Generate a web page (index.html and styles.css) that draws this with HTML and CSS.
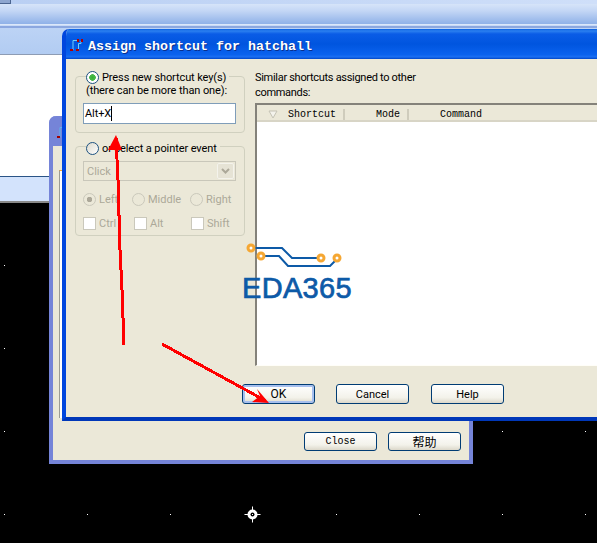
FILE: index.html
```html
<!DOCTYPE html>
<html lang="en">
<head>
  <meta charset="UTF-8">
  <meta name="viewport" content="width=device-width, initial-scale=1.0">
  <title>Assign shortcut for hatchall</title>
  <link rel="stylesheet" href="styles.css">
</head>
<body>

  <div class="desktop">
    <div class="menu-strip"><span class="menu-tab"></span></div>
    <div class="toolbar"></div>
    <div class="tool-lines"></div>
    <div class="tab-strip"></div>
    <div class="sheet"></div>
    <div class="status"></div>
    <svg class="canvas" width="597" height="340">
      <defs>
        <pattern id="grid" x="4" y="62" width="83" height="83" patternUnits="userSpaceOnUse">
          <rect width="1" height="1" fill="#fff"/>
        </pattern>
      </defs>
      <rect width="597" height="340" fill="url(#grid)"/>
      <g transform="translate(252.5 311.5)" fill="#fff">
        <path d="M-.5 -8h1v16h-1zM-8 -.5h16v1h-16z"/>
        <circle r="5"/>
        <circle r="2" fill="#000"/>
        <rect x="-.5" y="-.5" width="1" height="1"/>
      </g>
    </svg>
  </div>

  <!-- window behind -->
  <div class="window back-window">
    <div class="titlebar back-title">
      <svg class="title-icon" width="14" height="16" viewBox="0 0 14 16">
        <path d="M3 11V1.5H7" fill="none" stroke="#5fb4ee"/>
        <path d="M0 10h3v2H0z" fill="#a00000"/>
      </svg>
    </div>
    <div class="back-body">
      <div class="back-list"></div>
      <div class="back-footer">
        <button class="btn btn-mono">Close</button>
        <button class="btn btn-cjk">帮助</button>
      </div>
    </div>
  </div>

  <!-- shortcut dialog -->
  <div class="window front-window">
    <div class="titlebar">
      <svg class="title-icon" width="14" height="16" viewBox="0 0 14 16">
        <path d="M3 11V1.5H7M8.5 11V4.5H11V2" fill="none" stroke="#6fd0f8"/>
        <path d="M0 10h3v2H0zM6 10h3v2H6zM7 0h2v3H7zM11 0h2v3h-2z" fill="#b00000"/>
      </svg>
      <span class="title-text">Assign shortcut for hatchall</span>
    </div>

    <div class="dialog-body">
      <div class="dialog-main">
        <div class="left-col">
          <div class="group group-keys">
            <div class="group-head">
              <span class="radio radio-on"></span>
              <span>Press new shortcut key(s)</span>
            </div>
            <p class="hint">(there can be more than one):</p>
            <div class="key-input">Alt+X<span class="caret"></span></div>
          </div>

          <div class="group group-pointer">
            <div class="group-head">
              <span class="radio"></span>
              <span>or select a pointer event</span>
            </div>
            <div class="combo">
              <span class="combo-text">Click</span>
              <span class="combo-btn">
                <svg width="9" height="6"><path d="M1 1l3.5 3.5L8 1" fill="none" stroke="#aca899" stroke-width="2"/></svg>
              </span>
            </div>
            <div class="option-row radio-row">
              <label class="option opt-a"><span class="radio radio-off radio-dot"></span>Left</label>
              <label class="option opt-b"><span class="radio radio-off"></span>Middle</label>
              <label class="option"><span class="radio radio-off"></span>Right</label>
            </div>
            <div class="option-row check-row">
              <label class="option opt-a"><span class="check"></span>Ctrl</label>
              <label class="option opt-b"><span class="check"></span>Alt</label>
              <label class="option"><span class="check"></span>Shift</label>
            </div>
          </div>
        </div>

        <div class="right-col">
          <p class="similar">Similar shortcuts assigned to other<br>commands:</p>
          <div class="list">
            <div class="list-head">
              <span class="col col-shortcut">
                <svg class="sort" width="11" height="9"><path d="M1 1h8L5 8z" fill="#f4f3ec" stroke="#c4c2b4"/></svg>
                Shortcut
              </span>
              <span class="col col-mode">Mode</span>
              <span class="col col-command">Command</span>
            </div>
          </div>
        </div>
      </div>

      <div class="dialog-footer">
        <button class="btn btn-default">OK</button>
        <button class="btn btn-small">Cancel</button>
        <button class="btn btn-small btn-help">Help</button>
      </div>
    </div>
  </div>

  <!-- watermark and hand drawn arrows on top -->
  <div class="logo">
    <svg class="logo-traces" width="112" height="34" viewBox="0 0 112 34">
      <g fill="none" stroke="#0d5aa7" stroke-width="2">
        <path d="M9 7h31l10 10h29"/>
        <path d="M19 15h18l9 10h42l7-7"/>
      </g>
      <g fill="#fff" stroke="#f5a733" stroke-width="3">
        <circle cx="9" cy="7" r="3"/>
        <circle cx="19" cy="15" r="3"/>
        <circle cx="79" cy="17" r="3"/>
        <circle cx="95" cy="17" r="3"/>
      </g>
    </svg>
    <span class="logo-text">EDA365</span>
  </div>

  <svg class="arrows" width="597" height="543">
    <g fill="none" stroke="#ff0000" stroke-width="3" shape-rendering="crispEdges">
      <path d="M124 345L122 290L120 250L118 180L116 138"/>
      <path d="M162 344L266 401"/>
    </g>
    <path d="M116 135L108 150L122 150z" fill="#ff0000"/>
    <path d="M269 403L257 389L260 396L252 402z" fill="#ff0000"/>
  </svg>

</body>
</html>
```

FILE: styles.css
```css
* {
  box-sizing: border-box;
}

html, body {
  margin: 0;
  height: 100%;
  overflow: hidden;
}

body {
  position: relative;
  width: 597px;
  height: 543px;
  background: #000;
  font-family: Roboto, "Liberation Sans", sans-serif;
  font-size: 11px;
  color: #000;
}

p {
  margin: 0;
}

/* app behind the dialogs */
.desktop {
  display: flex;
  flex-direction: column;
  height: 543px;
}

.menu-strip {
  height: 4px;
  background: linear-gradient(90deg, #b9cff3, #cfdff9);
}

.menu-tab {
  display: block;
  width: 11px;
  height: 4px;
  background: #8ea6cf;
  border-right: 1px solid #4b6590;
  border-bottom: 1px solid #4b6590;
}

.toolbar {
  height: 20px;
  background: linear-gradient(#d6e4f9, #c3d6f5 35%, #8fb1e8);
}

.tool-lines {
  height: 4px;
  background: #c8daf6;
  border-top: 1px solid #dbe7fa;
  border-bottom: 2px solid #8ba7e0;
}

.tab-strip {
  height: 27px;
  background: linear-gradient(#bcd3f5, #b2ccf2);
  border-bottom: 1px solid #8d9cb4;
}

.sheet {
  height: 121px;
  background: #fff;
}

.status {
  height: 27px;
  background: #d3e3fc;
  border-top: 1px solid #2a5486;
  border-bottom: 2px solid #8a8a8a;
}

.canvas {
  display: block;
  background: #000;
}

/* windows */
.window {
  position: absolute;
  display: flex;
  flex-direction: column;
  background: #ebe8d8;
}

.front-window {
  left: 62px;
  top: 29px;
  width: 535px;
  height: 392px;
  border-radius: 7px 0 0 0;
  overflow: hidden;
  border-left: 4px solid #0046de;
  border-bottom: 4px solid #0037b8;
}

.back-window {
  left: 49px;
  top: 116px;
  width: 424px;
  height: 348px;
  border: 4px solid #7584d8;
  border-top: 0;
  border-radius: 7px 7px 0 0;
}

.titlebar {
  display: flex;
  align-items: center;
  flex-shrink: 0;
  height: 30px;
  margin-left: -4px;
  padding: 4px 0 0 8px;
  background: linear-gradient(#0a5fe0 0, #2b80f0 2px, #0a5ce6 5px, #0055df 50%, #0a62ee 85%, #1b6ff2 93%, #0046c8 100%);
}

.back-title {
  margin-right: -4px;
  background: #7584d8;
  border-radius: 7px 7px 0 0;
}

.title-icon {
  display: block;
  flex-shrink: 0;
  margin-right: 4px;
  margin-top: 1px;
}

.title-text {
  font-family: "Liberation Mono", monospace;
  font-size: 13.33px;
  font-weight: bold;
  color: #fff;
  text-shadow: 1px 1px 0 #0a2f8c;
}

.back-body {
  flex: 1;
  display: flex;
  flex-direction: column;
  padding-top: 24px;
}

.back-list {
  flex: 1;
  margin-left: 6px;
  background: #fff;
  border-left: 1px solid #9c9c94;
  border-top: 1px solid #f5a733;
}

.back-footer {
  display: flex;
  justify-content: flex-end;
  gap: 11px;
  padding: 14px 8px 9px 0;
}

/* dialog */
.dialog-body {
  flex: 1;
  display: flex;
  flex-direction: column;
}

.dialog-main {
  display: flex;
  gap: 10px;
  padding: 11px 0 0 9px;
}

.left-col {
  flex-shrink: 0;
  width: 170px;
}

.group {
  border: 1px solid #d0d0bf;
  border-radius: 4px;
  padding: 0 8px 0 7px;
}

.group-keys {
  height: 57px;
  margin-top: 6px;
}

.group-pointer {
  height: 90px;
  margin-top: 13px;
}

.group-head {
  display: flex;
  align-items: center;
  gap: 3px;
  width: fit-content;
  height: 14px;
  margin: -7px 0 0 3px;
  padding-right: 3px;
  background: #ebe8d8;
  letter-spacing: -.1px;
  white-space: nowrap;
}

.group-pointer .group-head {
  margin-top: -6px;
}

.hint {
  height: 14px;
  margin-left: 3px;
  line-height: 14px;
  letter-spacing: -.1px;
  white-space: nowrap;
}

.key-input {
  display: flex;
  align-items: center;
  height: 21px;
  margin-top: 5px;
  padding-left: 1px;
  background: #fff;
  border: 1px solid #7f9db9;
  letter-spacing: -.1px;
}

.caret {
  width: 1px;
  height: 15px;
  background: #000;
}

.radio {
  display: block;
  flex-shrink: 0;
  width: 13px;
  height: 13px;
  border: 1px solid #1c5180;
  border-radius: 50%;
  background: linear-gradient(135deg, #dcd9cc, #fff);
}

.radio-on {
  background: radial-gradient(circle, #35b035 0, #4bb84b 3px, #fff 3.6px);
}

.radio-off {
  border-color: #cac8bb;
  background: none;
}

.radio-dot {
  background: radial-gradient(circle, #aca899 0, #aca899 2.5px, transparent 3px);
}

.combo {
  display: flex;
  justify-content: space-between;
  height: 20px;
  margin-top: 6px;
  padding: 1px 1px 1px 3px;
  border: 1px solid #c9c7ba;
  color: #aca899;
}

.combo-text {
  line-height: 17px;
}

.combo-btn {
  display: flex;
  align-items: center;
  justify-content: center;
  width: 17px;
  background: #e6e3d5;
  border: 1px solid #f4f3ec;
  border-radius: 2px;
}

.option-row {
  display: flex;
  height: 14px;
  margin-top: 11px;
  color: #aca899;
}

.check-row {
  margin-top: 10px;
}

.option {
  display: flex;
  flex-shrink: 0;
  align-items: center;
  gap: 3px;
  width: 40px;
  white-space: nowrap;
}

.opt-a {
  width: 51px;
}

.opt-b {
  width: 57px;
}

.radio-row .opt-a {
  width: 49px;
}

.radio-row .opt-b {
  width: 58px;
}

.check {
  display: block;
  flex-shrink: 0;
  width: 13px;
  height: 13px;
  background: #fff;
  border: 1px solid #cac8bb;
}

/* list on the right */
.right-col {
  flex: 1;
  min-width: 0;
}

.similar {
  height: 30px;
  line-height: 15px;
  letter-spacing: -.3px;
  white-space: nowrap;
}

.list {
  height: 263px;
  margin-top: 3px;
  background: #fff;
  border-top: 2px solid #84827a;
  border-left: 2px solid #84827a;
  border-bottom: 1px solid #fffef8;
}

.list-head {
  display: flex;
  align-items: center;
  height: 17px;
  padding-top: 4px;
  background: #ebe8d8;
  border-bottom: 2px solid #d8d5c6;
  font-family: "Liberation Mono", monospace;
  font-size: 10px;
}

.col {
  display: flex;
  align-items: center;
  height: 11px;
  white-space: nowrap;
}

.col-shortcut {
  width: 88px;
  padding-left: 11px;
  border-right: 2px solid #cfccbc;
}

.sort {
  margin-right: 9px;
}

.col-mode {
  width: 64px;
  padding-left: 31px;
  border-right: 2px solid #cfccbc;
}

.col-command {
  padding-left: 31px;
}

.dialog-footer {
  display: flex;
  gap: 21px;
  padding: 18px 0 0 176px;
}

/* buttons */
.btn {
  width: 73px;
  height: 20px;
  padding: 0;
  border: 1px solid #003c74;
  border-radius: 3px;
  background: linear-gradient(#fff, #f3f2ea 70%, #dcd8ca);
  color: #000;
  font-family: Roboto, "Liberation Sans", sans-serif;
  font-size: 12px;
}

.btn-small {
  font-size: 11px;
}

.btn-help {
  margin-left: 1px;
}

.btn-mono {
  height: 19px;
  font-family: "Liberation Mono", monospace;
  font-size: 10px;
}

.btn-cjk {
  height: 19px;
  font-family: "Noto Sans CJK SC", sans-serif;
}

.btn-default {
  box-shadow: inset 0 0 0 2px #a6bfee;
}

/* watermark */
.logo {
  position: absolute;
  left: 242px;
  top: 241px;
  width: 112px;
}

.logo-traces {
  display: block;
}

.logo-text {
  display: block;
  margin-top: -1px;
  font-family: "Liberation Sans", Arial, sans-serif;
  font-size: 29px;
  line-height: 28px;
  letter-spacing: .3px;
  color: #0d5aa7;
  -webkit-text-stroke: .7px #0d5aa7;
}

.arrows {
  position: absolute;
  left: 0;
  top: 0;
  pointer-events: none;
}
```
